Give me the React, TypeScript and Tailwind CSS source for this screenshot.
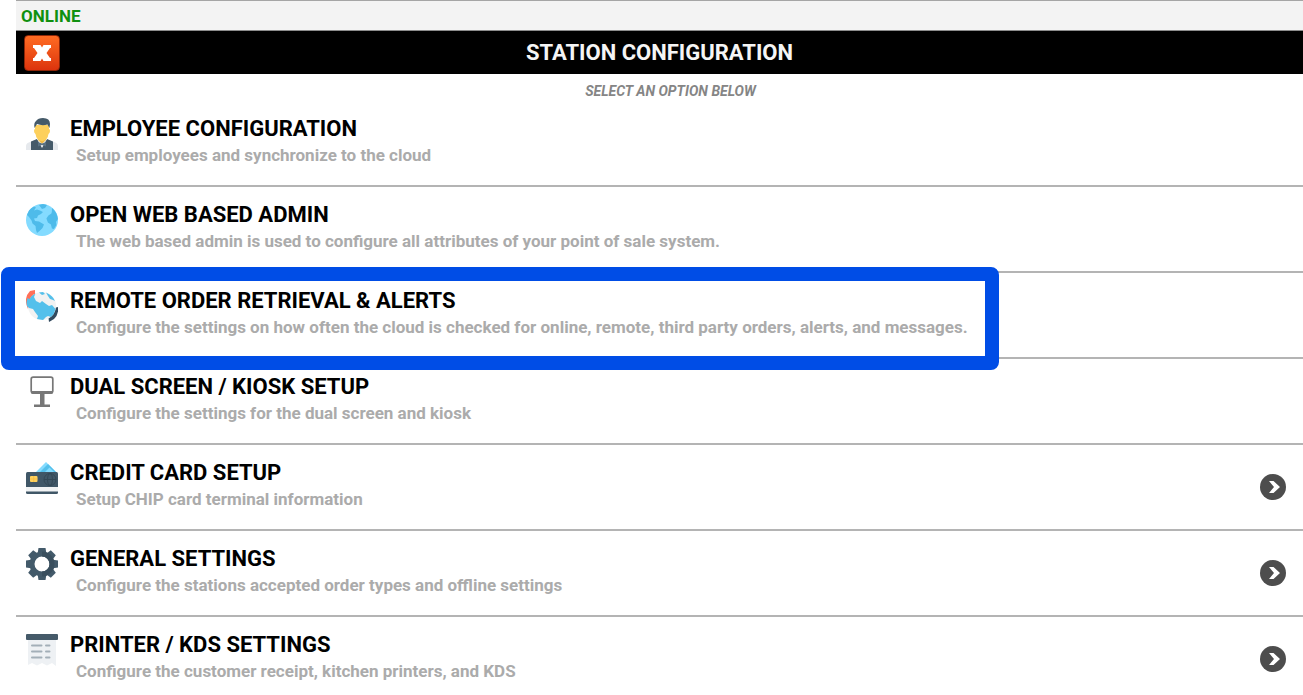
import type { ReactNode } from "react";

function EmployeeIcon() {
  return (
    <svg viewBox="0 0 32 32" className="size-8" aria-hidden="true">
      <path d="M0 32v-4q0-3 4-4l8-3h8l8 3q4 1 4 4v4z" fill="#e6e9ed" />
      <path d="M5 32v-8.500l6-2.500 5 5 5-5 6 2.500V32z" fill="#455a69" />
      <path d="M11 21l5 9 5-9z" fill="#f4f6f8" />
      <path d="M12 18h8v4l-4 4-4-4z" fill="#f2bb45" />
      <path d="M9 7h14v4q1 0 1 2t-1.500 3q-1 7-6.500 7t-6.500-7Q8 15 8 13t1-2z" fill="#fdd05c" />
      <path d="M8.500 10Q7.500 5 10 3q2-3 7-3 7 0 7 6l-.5 4-2-3.500Q16 8 11 6z" fill="#455a69" />
      <path d="M12 24l4 1.500 4-1.500v4.500L16 27l-4 1.500z" fill="#5b7282" />
    </svg>
  );
}

function GlobeIcon() {
  return (
    <svg viewBox="0 0 32 32" className="size-8" aria-hidden="true">
      <circle cx="16" cy="16" r="16" fill="#84dbff" />
      <path d="M3 6.500Q5 4 8 2.500l2 1-2 3 3-1 3 1 3 1.500-2 2-3 1.500-1 2.500-3 .5 1 2.500 4 .5 5 3-1.500 3.500-3 3-2.500 2-1-3-.500-4-3-2.500-1-3L3 13l-2-2z" fill="#4ebbea" />
      <path d="M13 1l4-1 4 1-2 3-3 1z" fill="#4ebbea" />
      <path d="M26 4q5 4 5.900 11l-2 3 .5 3-2.500 4-2-.5-1-4-3-2-1.500-4 2-3 3-2 .5-2z" fill="#4ebbea" />
    </svg>
  );
}

function RemoteIcon() {
  return (
    <svg viewBox="0 0 32 32" className="size-8" aria-hidden="true">
      <path d="M9 0v4Q4 8 4 16l-2 3Q-3 8 4 1z" fill="#ff7058" />
      <path d="M28 18l4-1q1 7-4 12l-5 3-.500-4z" fill="#324a5e" />
      <circle cx="16" cy="16" r="14" fill="#f2f2f2" />
      <path d="M3.500 9Q6 5 9.500 3.500L8 7l2 4 4 2 2-2 4 3 3 2 3-1 3.500 4q-1 5-4.500 8l-3-1-2 1-3 3-6-1 1-3-3-4-2-3-4-1-2-2q-1-5 .500-8z" fill="#54c0eb" />
      <path d="M13 2.500l4-.5 2 2-3 1zM20 2.500q7 3 9 8.500l-2-1-3-1-2-3z" fill="#54c0eb" />
    </svg>
  );
}

function ScreenIcon() {
  return (
    <svg viewBox="0 0 32 32" className="size-8" aria-hidden="true">
      <rect x="5.200" y="1.200" width="21.600" height="15.600" rx="2" fill="#fff" stroke="#777" strokeWidth="1.700" />
      <path d="M5 15h22v1.500q0 1.500-2 1.500H7q-2 0-2-1.500zM14 18h4.500v10.500H24V31H8v-2.500h6z" fill="#777" />
    </svg>
  );
}

function CardIcon() {
  return (
    <svg viewBox="0 0 32 32" className="size-8" aria-hidden="true">
      <path d="M9 11L20 0l11 11z" fill="#84dbff" />
      <path d="M13 11l9-9 9 9z" fill="#54c0eb" />
      <path d="M18 11l5.500-5.500L29 11z" fill="#84dbff" />
      <rect y="10" width="32" height="22" rx="1.500" fill="#405767" />
      <path d="M0 25h32v4.500H0z" fill="#f1f3f4" />
      <g fill="none" stroke="#334856">
        <circle cx="24" cy="17.500" r="6" />
        <ellipse cx="24" cy="17.500" rx="2.500" ry="6" />
        <path d="M18 17.500h12" />
      </g>
      <rect x="4" y="14" width="7.500" height="6" rx="1" fill="#ffd15c" />
      <path d="M7.700 14v6M4 17h7.500" stroke="#efb83f" strokeWidth=".7" />
    </svg>
  );
}

function GearIcon() {
  const teeth = [0, 45, 90, 135, 180, 225, 270, 315];
  return (
    <svg viewBox="0 0 32 32" className="size-8" aria-hidden="true">
      <g fill="#435a6a">
        {teeth.map((angle) => (
          <path key={angle} d="M11.700 5L12.500 0h7l.8 5z" transform={`rotate(${angle} 16 16)`} />
        ))}
      </g>
      <circle cx="16" cy="16" r="10" fill="none" stroke="#435a6a" strokeWidth="5" />
      <path d="M16 3.500a12.500 12.500 0 0 1 0 25v-5a7.500 7.500 0 0 0 0-15z" fill="#3a4f5e" />
    </svg>
  );
}

function ReceiptIcon() {
  return (
    <svg viewBox="0 0 32 32" className="size-8" aria-hidden="true">
      <path d="M2 5h28v27l-4-3-5 2.500-5-2.500-5 2.500L6 29l-4 2z" fill="#eef1f4" />
      <rect width="32" height="6" rx="1" fill="#455a69" />
      <path d="M6 11.500h9.500M6 17.500h9.500M6 23.500h9.500M20 11.500h3.500M20 17.500h3.500M20 23.500h3.500" stroke="#a3afb8" strokeWidth="2" strokeLinecap="round" />
    </svg>
  );
}

function ArrowIcon() {
  return (
    <svg viewBox="0 0 26 26" className="size-[26px] shrink-0" aria-hidden="true">
      <circle cx="13" cy="13" r="13" fill="#4d4d4d" />
      <path d="M9 7h4.500l6.500 6-6.500 6H9l5-6z" fill="#fff" />
    </svg>
  );
}

type Option = {
  title: string;
  description: string;
  icon: ReactNode;
  arrow?: boolean;
  highlighted?: boolean;
};

const options: Option[] = [
  { title: "EMPLOYEE CONFIGURATION", description: "Setup employees and synchronize to the cloud", icon: <EmployeeIcon /> },
  { title: "OPEN WEB BASED ADMIN", description: "The web based admin is used to configure all attributes of your point of sale system.", icon: <GlobeIcon /> },
  { title: "REMOTE ORDER RETRIEVAL & ALERTS", description: "Configure the settings on how often the cloud is checked for online, remote, third party orders, alerts, and messages.", icon: <RemoteIcon />, highlighted: true },
  { title: "DUAL SCREEN / KIOSK SETUP", description: "Configure the settings for the dual screen and kiosk", icon: <ScreenIcon /> },
  { title: "CREDIT CARD SETUP", description: "Setup CHIP card terminal information", icon: <CardIcon />, arrow: true },
  { title: "GENERAL SETTINGS", description: "Configure the stations accepted order types and offline settings", icon: <GearIcon />, arrow: true },
  { title: "PRINTER / KDS SETTINGS", description: "Configure the customer receipt, kitchen printers, and KDS", icon: <ReceiptIcon />, arrow: true },
];

function OptionRow({ title, description, icon, arrow, highlighted }: Option) {
  return (
    <li className="relative border-b-2 border-[#b4b4b4] last:border-b-0">
      <button type="button" className="flex w-full items-center pr-[17px] pl-[10px] text-left">
        <span className="shrink-0 self-start pt-[17px]">{icon}</span>
        <span className="flex grow flex-col gap-[2px] pt-4 pb-[18px] pl-3">
          <span className="text-[22px] leading-6 font-bold text-black">{title}</span>
          <span className="pl-[6px] text-[17px] leading-6 font-bold text-[#ababab]">{description}</span>
        </span>
        {arrow && <ArrowIcon />}
      </button>
      {highlighted && (
        <div className="pointer-events-none absolute -top-[6px] -left-[15px] h-[103px] w-[998px] rounded-lg border-[14px] border-[#004de6]" />
      )}
    </li>
  );
}

export default function App() {
  return (
    <main className="overflow-hidden bg-white pl-4 font-['Roboto','Liberation_Sans',sans-serif]">
      <div className="border-t border-b border-t-[#a5a5a5] border-b-[#8c8c8c] bg-[#f3f3f3] pt-[2px] pl-[5px] text-[17px] leading-[27px] font-bold text-[#109010]">
        ONLINE
      </div>
      <header className="grid grid-cols-[36px_1fr_36px] items-center bg-black px-2 pt-1 pb-[3px]">
        <button
          type="button"
          aria-label="Close"
          className="flex size-9 items-center justify-center rounded-sm border border-[#8e2608] bg-linear-to-b from-[#ff6a22] to-[#dc330d]"
        >
          <svg viewBox="0 0 18 18" className="size-[18px]" aria-hidden="true">
            <path d="M0 1h7.500L9 3.500 10.500 1H18v3h-1L13.500 9l3.500 5h1v3h-7.500L9 14.500 7.500 17H0v-3h1l3.500-5L1 4H0z" fill="#fff" />
          </svg>
        </button>
        <h1 className="text-center text-[22px] leading-9 font-bold text-[#f5f5f5]">STATION CONFIGURATION</h1>
      </header>
      <p className="pt-[7px] pl-[22px] text-center text-[14px] leading-5 font-bold text-[#858585] italic">SELECT AN OPTION BELOW</p>
      <ul>
        {options.map((option) => (
          <OptionRow key={option.title} {...option} />
        ))}
      </ul>
    </main>
  );
}
